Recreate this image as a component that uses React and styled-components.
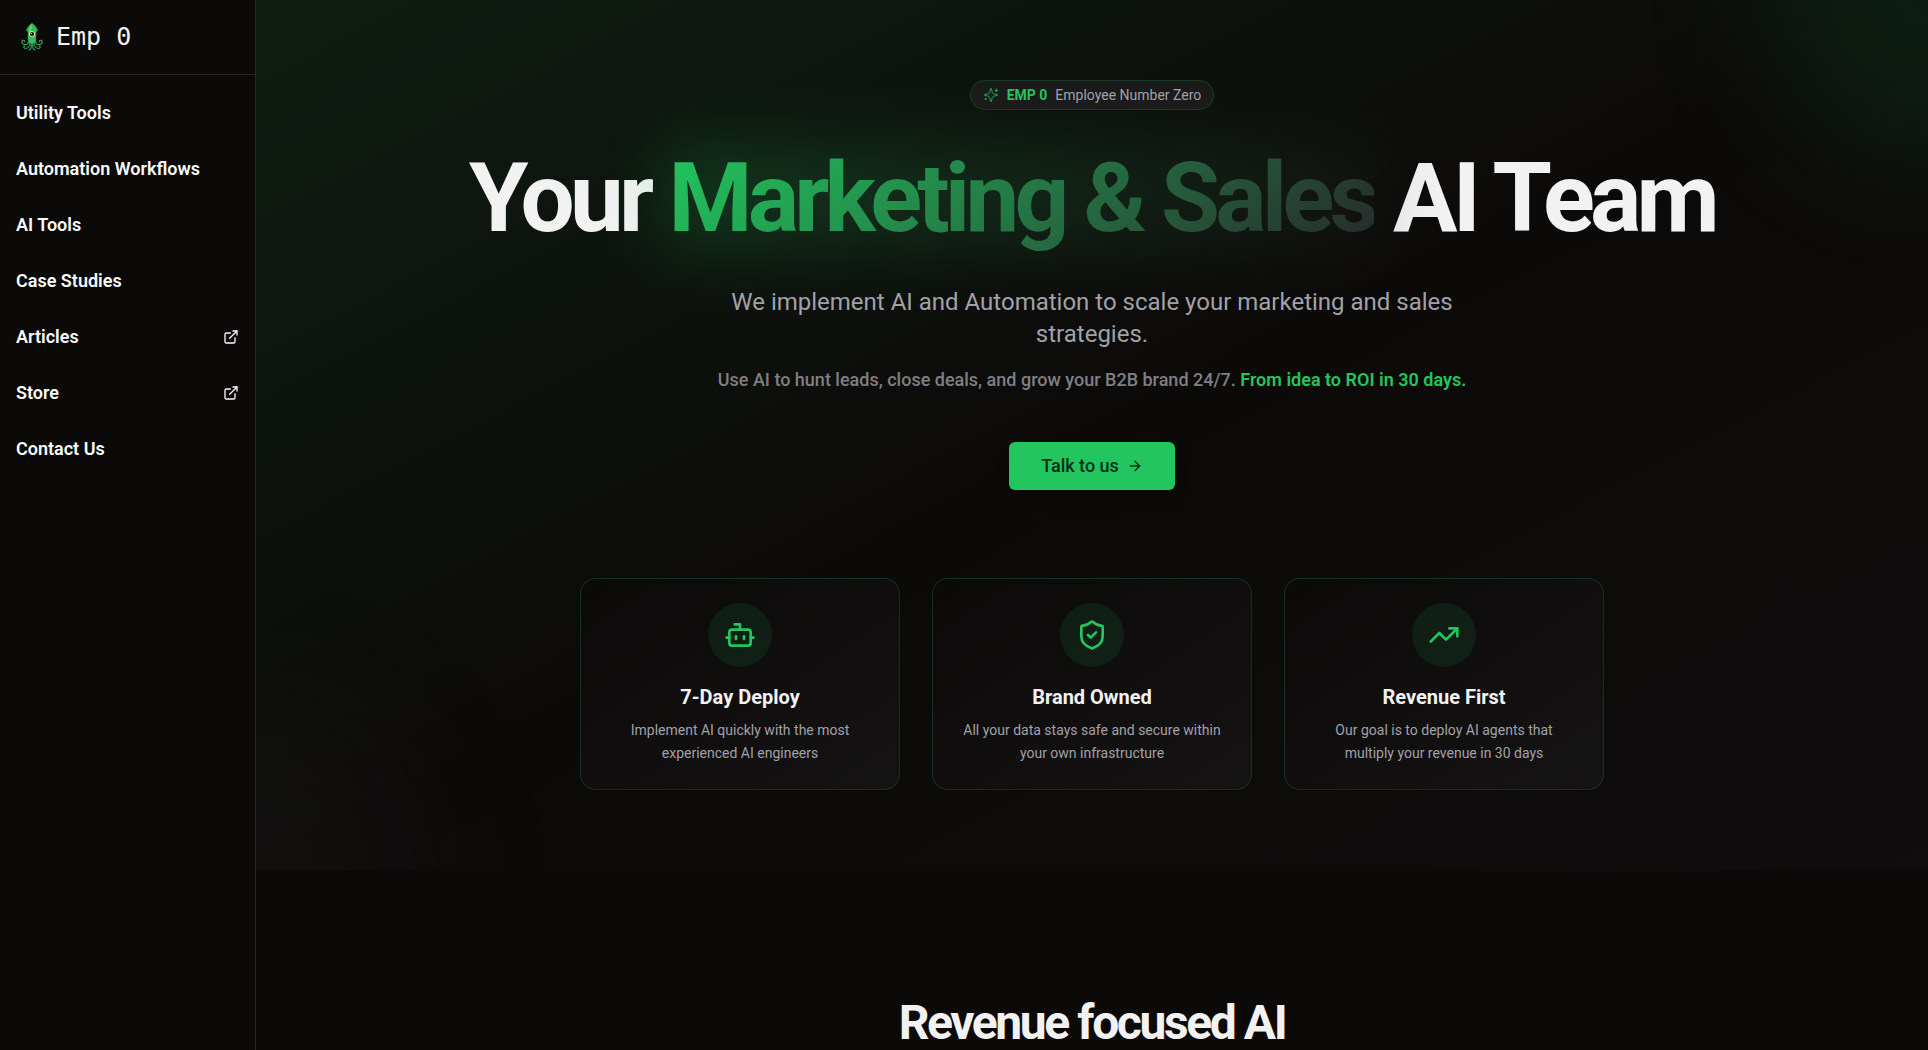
import React from "react";
import styled, { createGlobalStyle } from "styled-components";
import {
  ArrowRight,
  Bot,
  ExternalLink,
  ShieldCheck,
  TrendingUp,
} from "lucide-react";

const colors = {
  background: "#0c0a09",
  foreground: "#f2f2f2",
  muted: "#a1a1aa",
  primary: "#22c55e",
  primaryText: "#052e16",
  secondary: "#27272a",
  border: "#272725",
};

const GlobalStyle = createGlobalStyle`
  *, *::before, *::after {
    box-sizing: border-box;
  }
  body {
    margin: 0;
    background: ${colors.background};
    color: ${colors.foreground};
    font-family: Roboto, "Liberation Sans", sans-serif;
  }
  h1, h2, h3, p, ul {
    margin: 0;
    padding: 0;
  }
`;

const Page = styled.div`
  display: flex;
  height: 100vh;
  overflow: hidden;
`;

const Sidebar = styled.aside`
  flex: 0 0 256px;
  border-right: 1px solid ${colors.border};
`;

const Brand = styled.a`
  display: flex;
  align-items: center;
  gap: 12px;
  height: 75px;
  padding: 0 20px;
  border-bottom: 1px solid ${colors.border};
  color: ${colors.foreground};
  font-family: "DejaVu Sans Mono", monospace;
  font-size: 25px;
  line-height: 32px;
  text-decoration: none;
`;

const NavList = styled.ul`
  display: flex;
  flex-direction: column;
  gap: 4px;
  padding: 12px 0;
  list-style: none;
`;

const NavLink = styled.a`
  display: flex;
  align-items: center;
  justify-content: space-between;
  padding: 12px 16px;
  color: #fafafa;
  font-size: 18px;
  font-weight: 600;
  line-height: 28px;
  text-decoration: none;
`;

const Main = styled.main`
  flex: 1;
  min-width: 0;
  overflow: hidden;
`;

const Hero = styled.section`
  position: relative;
  display: flex;
  flex-direction: column;
  align-items: center;
  padding: 80px 24px;
  overflow: hidden;
  text-align: center;
  background: linear-gradient(
    to bottom right,
    rgba(34, 197, 94, 0.1),
    ${colors.background} 50%,
    rgba(39, 39, 42, 0.1)
  );
`;

const Blob = styled.div`
  position: absolute;
  width: 320px;
  height: 320px;
  border-radius: 50%;
  filter: blur(64px);
`;

const TopBlob = styled(Blob)`
  top: -160px;
  right: -160px;
  background: rgba(34, 197, 94, 0.1);
`;

const BottomBlob = styled(Blob)`
  bottom: -160px;
  left: -160px;
  background: rgba(39, 39, 42, 0.2);
`;

const Badge = styled.div`
  position: relative;
  display: flex;
  align-items: center;
  gap: 8px;
  margin-bottom: 40px;
  padding: 4px 12px;
  border: 1px solid rgba(34, 197, 94, 0.2);
  border-radius: 16px;
  background: #1a1a1a;
  color: ${colors.muted};
  font-size: 14px;
  line-height: 20px;

  strong {
    color: ${colors.primary};
    font-weight: 700;
  }
`;

const Title = styled.h1`
  position: relative;
  margin-bottom: 40px;
  font-size: 96px;
  font-weight: 700;
  line-height: 96px;
  letter-spacing: -0.05em;
`;

const Highlight = styled.span`
  position: relative;
  display: inline-block;
`;

const HighlightGlow = styled.span`
  position: absolute;
  inset: -8px;
  background: linear-gradient(135deg, ${colors.primary}, ${colors.secondary});
  filter: blur(32px);
  opacity: 0.2;
`;

const HighlightText = styled.span`
  position: relative;
  display: block;
  margin-bottom: -16px;
  padding-bottom: 16px;
  background: linear-gradient(135deg, ${colors.primary}, ${colors.secondary});
  background-clip: text;
  color: transparent;
`;

const Lead = styled.p`
  position: relative;
  max-width: 768px;
  margin-bottom: 16px;
  color: ${colors.muted};
  font-size: 24px;
  line-height: 32px;
`;

const SubLead = styled.p`
  position: relative;
  margin-bottom: 48px;
  color: #807f84;
  font-size: 18px;
  font-weight: 500;
  line-height: 28px;

  strong {
    color: ${colors.primary};
    font-weight: 600;
  }
`;

const CtaButton = styled.button`
  position: relative;
  display: flex;
  align-items: center;
  gap: 8px;
  height: 48px;
  margin-bottom: 88px;
  padding: 0 32px;
  border: 0;
  border-radius: 6px;
  background: ${colors.primary};
  box-shadow: 0 10px 15px -3px rgba(0, 0, 0, 0.3);
  color: ${colors.primaryText};
  font-family: inherit;
  font-size: 18px;
  font-weight: 500;
  line-height: 28px;
  cursor: pointer;
`;

const CardGrid = styled.div`
  position: relative;
  display: grid;
  grid-template-columns: repeat(3, 1fr);
  gap: 32px;
  width: 100%;
  max-width: 1024px;
`;

const Card = styled.article`
  display: flex;
  flex-direction: column;
  align-items: center;
  padding: 24px;
  border: 1px solid rgba(34, 197, 94, 0.2);
  border-radius: 16px;
  background: linear-gradient(
    to bottom right,
    ${colors.background},
    rgba(39, 39, 42, 0.3)
  );
`;

const CardIcon = styled.div`
  display: flex;
  align-items: center;
  justify-content: center;
  width: 64px;
  height: 64px;
  margin-bottom: 16px;
  border-radius: 50%;
  background: rgba(34, 197, 94, 0.1);
  color: ${colors.primary};
`;

const CardTitle = styled.h3`
  margin-bottom: 8px;
  font-size: 20px;
  font-weight: 700;
  line-height: 28px;
`;

const CardText = styled.p`
  color: ${colors.muted};
  font-size: 14px;
  line-height: 23px;
`;

const Section = styled.section`
  padding: 128px 24px;
  text-align: center;
`;

const SectionTitle = styled.h2`
  font-size: 48px;
  font-weight: 700;
  line-height: 50px;
  letter-spacing: -0.05em;
`;

const SquidLogo = () => (
  <svg width="24" height="30" viewBox="0 0 24 30" fill="none" aria-hidden="true">
    <g stroke="#2fa352" strokeWidth="1.2" strokeLinecap="round">
      <path d="M9 18c-.5 4-2.500 5-5 4.500-2.500-.6-3-3.500-1-4.200 1.400-.3 2 .9 1.200 1.600" />
      <path d="M15 18c.5 4 2.500 5 5 4.500 2.500-.6 3-3.500 1-4.200-1.400-.3-2 .9-1.200 1.600" />
      <path d="M10 20c0 4-2 6.500-4.500 6.500-2 0-2.300-2-.8-2.300" />
      <path d="M14 20c0 4 2 6.500 4.500 6.500 2 0 2.300-2 .8-2.300" />
      <path d="M11.300 20c.4 4-.3 7.500-2.300 8" />
      <path d="M12.700 20c-.4 4 .3 7.500 2.300 8" />
    </g>
    <path
      d="M12 1C9.500 3 7.200 5.500 6.200 8.200c.8.900 1.200 1.300 1.600 1.500L7.800 14c0 3 .7 5 1.200 7h6c.5-2 1.200-4 1.200-7V9.700c.4-.2.8-.6 1.600-1.500C16.800 5.500 14.500 3 12 1Z"
      fill="#37b95b"
    />
    <path d="M12 2c-1.500 2-2.600 4.500-2.600 7L9 14l1.500-2L12 2Z" fill="#6fdc78" />
    <circle cx="12" cy="12" r="3" fill="#c9e08a" />
    <circle cx="12" cy="12" r="2.100" fill="#10170f" />
    <circle cx="11.300" cy="11.300" r=".6" fill="#fff" />
  </svg>
);

const SparkleIcon = () => (
  <svg
    width="16"
    height="16"
    viewBox="0 0 24 24"
    fill="none"
    stroke="#22c55e"
    strokeOpacity="0.8"
    strokeWidth="1.500"
    strokeLinecap="round"
    strokeLinejoin="round"
    aria-hidden="true"
  >
    <path d="M9.937 15.500A2 2 0 0 0 8.500 14.063l-6.135-1.582a.5.5 0 0 1 0-.962L8.500 9.936A2 2 0 0 0 9.937 8.500l1.582-6.135a.5.5 0 0 1 .963 0L14.063 8.500A2 2 0 0 0 15.500 9.937l6.135 1.581a.5.5 0 0 1 0 .964L15.500 14.063a2 2 0 0 0-1.437 1.437l-1.582 6.135a.5.5 0 0 1-.963 0z" />
    <path d="M20 3v4M22 5h-4M4 17v2M5 18H3" />
  </svg>
);

const navItems = [
  { label: "Utility Tools" },
  { label: "Automation Workflows" },
  { label: "AI Tools" },
  { label: "Case Studies" },
  { label: "Articles", external: true },
  { label: "Store", external: true },
  { label: "Contact Us" },
];

const features = [
  {
    icon: Bot,
    title: "7-Day Deploy",
    text: "Implement AI quickly with the most experienced AI engineers",
  },
  {
    icon: ShieldCheck,
    title: "Brand Owned",
    text: "All your data stays safe and secure within your own infrastructure",
  },
  {
    icon: TrendingUp,
    title: "Revenue First",
    text: "Our goal is to deploy AI agents that multiply your revenue in 30 days",
  },
];

const App = () => {
  return (
    <Page>
      <GlobalStyle />
      <Sidebar>
        <Brand href="#">
          <SquidLogo />
          Emp 0
        </Brand>
        <nav>
          <NavList>
            {navItems.map(({ label, external }) => (
              <li key={label}>
                <NavLink href="#">
                  {label}
                  {external && <ExternalLink size={16} />}
                </NavLink>
              </li>
            ))}
          </NavList>
        </nav>
      </Sidebar>
      <Main>
        <Hero>
          <TopBlob />
          <BottomBlob />
          <Badge>
            <SparkleIcon />
            <strong>EMP 0</strong>
            <span>Employee Number Zero</span>
          </Badge>
          <Title>
            Your{" "}
            <Highlight>
              <HighlightGlow />
              <HighlightText>Marketing &amp; Sales</HighlightText>
            </Highlight>{" "}
            AI Team
          </Title>
          <Lead>
            We implement AI and Automation to scale your marketing and sales
            strategies.
          </Lead>
          <SubLead>
            Use AI to hunt leads, close deals, and grow your B2B brand 24/7.{" "}
            <strong>From idea to ROI in 30 days.</strong>
          </SubLead>
          <CtaButton type="button">
            Talk to us
            <ArrowRight size={16} />
          </CtaButton>
          <CardGrid>
            {features.map(({ icon: Icon, title, text }) => (
              <Card key={title}>
                <CardIcon>
                  <Icon size={32} />
                </CardIcon>
                <CardTitle>{title}</CardTitle>
                <CardText>{text}</CardText>
              </Card>
            ))}
          </CardGrid>
        </Hero>
        <Section>
          <SectionTitle>Revenue focused AI</SectionTitle>
        </Section>
      </Main>
    </Page>
  );
};

export default App;
